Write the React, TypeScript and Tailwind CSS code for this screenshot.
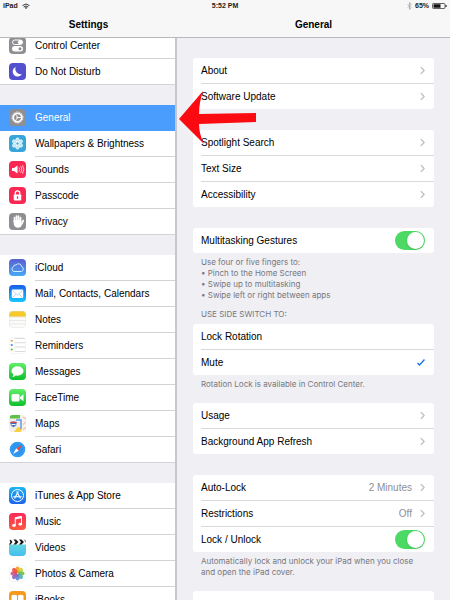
import { ReactNode, useState } from "react";

function Tile({ bg, children }: { bg: string; children: ReactNode }) {
  return (
    <svg viewBox="0 0 34 34" className="size-[17px] shrink-0 overflow-hidden rounded-[4px]" aria-hidden="true">
      <defs>
        <linearGradient id="green" x1="0" y1="0" x2="0" y2="1">
          <stop offset="0" stopColor="#62ee6b" />
          <stop offset="1" stopColor="#0ebf2c" />
        </linearGradient>
        <linearGradient id="cloud" x1="0" y1="0" x2="0" y2="1">
          <stop offset="0" stopColor="#5a5fd0" />
          <stop offset="1" stopColor="#47a8f5" />
        </linearGradient>
        <linearGradient id="mail" x1="0" y1="0" x2="0" y2="1">
          <stop offset="0" stopColor="#1a5ee8" />
          <stop offset="1" stopColor="#17c8fb" />
        </linearGradient>
        <linearGradient id="store" x1="0" y1="0" x2="0" y2="1">
          <stop offset="0" stopColor="#1cb5f5" />
          <stop offset="1" stopColor="#1d63ea" />
        </linearGradient>
        <linearGradient id="music" x1="0" y1="0" x2="0" y2="1">
          <stop offset="0" stopColor="#fb2a5c" />
          <stop offset="1" stopColor="#fb5a3c" />
        </linearGradient>
        <linearGradient id="video" x1="0" y1="0" x2="0" y2="1">
          <stop offset="0" stopColor="#6fe3d2" />
          <stop offset="1" stopColor="#45bdf0" />
        </linearGradient>
      </defs>
      <rect width="34" height="34" fill={bg} />
      {children}
    </svg>
  );
}

const controlCenter = (
  <Tile bg="#8e8e93">
    <rect x="7" y="6" width="20" height="9" rx="4.500" fill="none" stroke="#fff" strokeWidth="2" />
    <circle cx="22.500" cy="10.500" r="4.500" fill="#fff" />
    <rect x="6" y="18" width="22" height="11" rx="5.500" fill="#fff" />
    <circle cx="22" cy="23.500" r="3" fill="#8e8e93" />
  </Tile>
);
const moon = (
  <Tile bg="#5350d0">
    <path d="M13 8a10 10 0 1 0 13 14A11 11 0 0 1 13 8z" fill="#fff" />
  </Tile>
);
const gear = (
  <Tile bg="#8e8e93">
    <circle cx="17" cy="17" r="11" fill="none" stroke="#fff" strokeWidth="2" strokeDasharray="2 1.400" />
    <circle cx="17" cy="17" r="8.500" fill="none" stroke="#fff" strokeWidth="3.500" />
    <path d="M17 17h8M17 17l-4.500-7.500M17 17l-4.500 7.500" stroke="#fff" strokeWidth="1.600" />
    <circle cx="17" cy="17" r="2" fill="#fff" />
  </Tile>
);
const flower = (
  <Tile bg="#37a5d8">
    {[0, 60, 120, 180, 240, 300].map((a) => (
      <g key={a} transform={`rotate(${a} 17 17)`}>
        <ellipse cx="17" cy="10.500" rx="3.500" ry="4.800" fill="#b9e6f7" stroke="#fff" strokeWidth="1.300" />
      </g>
    ))}
    <circle cx="17" cy="17" r="3" fill="#37a5d8" stroke="#fff" strokeWidth="1.500" />
  </Tile>
);
const sound = (
  <Tile bg="#fc2854">
    <path d="M6 14h4l7-5v16l-7-5H6z" fill="#fff" />
    <path d="M20 13q3 4 0 8M23.500 10.500q4.500 6.500 0 13M27 8.500q5.500 8.500 0 17" fill="none" stroke="#fff" strokeWidth="1.500" />
  </Tile>
);
const lock = (
  <Tile bg="#fc2854">
    <path d="M12.500 16v-4a4.500 4.500 0 0 1 9 0v4" fill="none" stroke="#fff" strokeWidth="2.500" />
    <rect x="9.500" y="15" width="15" height="12" rx="1.500" fill="#fff" />
    <path d="M17 18.500v5" stroke="#fc2854" strokeWidth="2.500" />
  </Tile>
);
const hand = (
  <Tile bg="#8e8e93">
    <path d="M11 18V9M15 17V6M19 17V6M23 18V9M26.500 20l2-5" stroke="#fff" strokeWidth="3.400" strokeLinecap="round" />
    <path d="M9.300 14h15.400v7l3-3c-1 5-3 11.500-9 11.500s-9.400-4-9.400-9.500z" fill="#fff" />
  </Tile>
);
const cloud = (
  <Tile bg="url(#cloud)">
    <path
      d="M10 25a5 5 0 0 1-1-9.500 4 4 0 0 1 5-3.500 6.500 6.500 0 0 1 11.500 3.500A5 5 0 0 1 25 25z"
      fill="none"
      stroke="#d9ecff"
      strokeWidth="2"
    />
  </Tile>
);
const mail = (
  <Tile bg="url(#mail)">
    <rect x="5.500" y="9" width="23" height="17" rx="2" fill="#fff" />
    <path d="M7 11l10 9 10-9M7 25l7-7M27 25l-7-7" fill="none" stroke="#8fc0ee" strokeWidth="1.300" />
  </Tile>
);
const notes = (
  <Tile bg="#fbfbfa">
    <rect width="34" height="11" fill="#f7c928" />
    <path d="M0 11.500h34" stroke="#d8c48a" />
    <path d="M0 19h34M0 26h34" stroke="#dedede" strokeWidth="1.200" />
    <rect x="0.500" y="0.500" width="33" height="33" rx="7.500" fill="none" stroke="#dcdcdc" />
  </Tile>
);
const reminders = (
  <Tile bg="#fff">
    <path d="M11 3h22M11 11.500h22M11 20h22M11 29h22" stroke="#cfcfcf" strokeWidth="1.500" />
    <circle cx="5.500" cy="7.500" r="2.200" fill="#f39a3c" />
    <circle cx="5.500" cy="16" r="2.200" fill="#3a8be8" />
    <circle cx="5.500" cy="25" r="2.200" fill="#58c436" />
    <rect x="0.500" y="0.500" width="33" height="33" rx="7.500" fill="none" stroke="#e4e4e4" />
  </Tile>
);
const messages = (
  <Tile bg="url(#green)">
    <ellipse cx="17" cy="16" rx="12" ry="9.500" fill="#fff" />
    <path d="M9 21q0 5-3 7 6 0 8-4z" fill="#fff" />
  </Tile>
);
const facetime = (
  <Tile bg="url(#green)">
    <rect x="5" y="10" width="16" height="15" rx="3" fill="#fff" />
    <path d="M22 16l7-5.500v14L22 19z" fill="#fff" />
  </Tile>
);
const maps = (
  <Tile bg="#f4efe4">
    <path d="M2 0h20v7H2z" fill="#5fc04a" />
    <path d="M26 0h8v34h-8z" fill="#fbf0ea" />
    <path d="M10 34l8-11 8 6-3 5z" fill="#f8cf3d" />
    <path d="M14 10h10v18" fill="none" stroke="#5d9be8" strokeWidth="3" />
    <path d="M28 4l6 4M28 19l6-5M28 29l6-4" stroke="#f0b09b" strokeWidth="2" />
    <path d="M2 14q7-3 14 0 1 7-7 11-8-4-7-11z" fill="#3d6fc4" stroke="#fff" />
    <path d="M2.500 14q6.500-2.500 13 0v2h-13z" fill="#d9493f" />
    <path d="M5 19h8" stroke="#fff" strokeWidth="2" />
  </Tile>
);
const safari = (
  <Tile bg="#fff">
    <circle cx="17" cy="17" r="15.500" fill="#2b95f0" />
    <circle cx="17" cy="17" r="13" fill="none" stroke="#6cbcf8" strokeWidth="2" strokeDasharray="0.800 1.900" />
    <path d="M26 8L14.500 14.500l5 5z" fill="#f0453c" />
    <path d="M8 26l6.500-11.500 5 5z" fill="#fff" />
  </Tile>
);
const store = (
  <Tile bg="url(#store)">
    <circle cx="17" cy="17" r="12" fill="none" stroke="#fff" strokeWidth="2" />
    <path d="M18.500 9L11 23M15.500 9L23 23M8.500 19.500h17" stroke="#fff" strokeWidth="2.300" />
  </Tile>
);
const music = (
  <Tile bg="url(#music)">
    <path d="M12.500 24V9.500L25 7v14.500" fill="none" stroke="#fff" strokeWidth="2" />
    <path d="M12.500 8.500L25 6v4.500L12.500 13z" fill="#fff" />
    <ellipse cx="10" cy="25" rx="3.600" ry="2.800" fill="#fff" />
    <ellipse cx="22.500" cy="22.500" rx="3.600" ry="2.800" fill="#fff" />
  </Tile>
);
const videos = (
  <Tile bg="url(#video)">
    <rect width="34" height="11" fill="#fff" />
    <path d="M0 1h3l4 5-4 5H0l3-5zM9 1h5l5 5-5 5H9l4-5zM20 1h5l5 5-5 5h-5l4-5zM30 1h4v6z" fill="#151515" />
  </Tile>
);
const petals = ["#f79a1e", "#c9cf2c", "#6fbb4a", "#4fb3a8", "#5b86d6", "#8a62bd", "#d0508f", "#ee4b3a"];
const photos = (
  <Tile bg="#fff">
    {petals.map((color, i) => (
      <g key={color} transform={`rotate(${i * 45} 17 17)`}>
        <rect x="13" y="3" width="8" height="13" rx="4" fill={color} fillOpacity="0.880" />
      </g>
    ))}
    <rect x="0.500" y="0.500" width="33" height="33" rx="7.500" fill="none" stroke="#e4e4e4" />
  </Tile>
);
const books = (
  <Tile bg="#f79a1c">
    <path d="M5 9q6-3 11 0v19q-5-3-11 0zM29 9q-6-3-11 0v19q5-3 11 0z" fill="#fff" />
  </Tile>
);

type Item = { label: string; icon: ReactNode };

const groups: Item[][] = [
  [
    { label: "Control Center", icon: controlCenter },
    { label: "Do Not Disturb", icon: moon },
  ],
  [
    { label: "General", icon: gear },
    { label: "Wallpapers & Brightness", icon: flower },
    { label: "Sounds", icon: sound },
    { label: "Passcode", icon: lock },
    { label: "Privacy", icon: hand },
  ],
  [
    { label: "iCloud", icon: cloud },
    { label: "Mail, Contacts, Calendars", icon: mail },
    { label: "Notes", icon: notes },
    { label: "Reminders", icon: reminders },
    { label: "Messages", icon: messages },
    { label: "FaceTime", icon: facetime },
    { label: "Maps", icon: maps },
    { label: "Safari", icon: safari },
  ],
  [
    { label: "iTunes & App Store", icon: store },
    { label: "Music", icon: music },
    { label: "Videos", icon: videos },
    { label: "Photos & Camera", icon: photos },
    { label: "iBooks", icon: books },
  ],
];

function Sidebar() {
  const [selected, setSelected] = useState("General");
  return (
    <nav aria-label="Settings" className="-mt-[5px] flex flex-col gap-5 border-r-2 border-[#c6c6cc]">
      {groups.map((group) => (
        <ul key={group[0].label} className="border-b border-[#d3d3d8] bg-white last:border-b-0">
          {group.map(({ label, icon }, i) => {
            const active = label === selected;
            return (
              <li key={label}>
                {i > 0 && (
                  <div
                    className={
                      active || group[i - 1].label === selected ? "h-px bg-[#4a9dfd]" : "ml-[35px] h-px bg-[#d3d3d6]"
                    }
                  />
                )}
                <button
                  type="button"
                  aria-current={active}
                  onClick={() => setSelected(label)}
                  className={`flex h-[25px] w-full items-center gap-[9px] pl-[9px] text-left whitespace-nowrap ${active ? "bg-[#4a9dfd] text-white" : ""}`}
                >
                  {icon}
                  {label}
                </button>
              </li>
            );
          })}
        </ul>
      ))}
    </nav>
  );
}

function Card({ children }: { children: ReactNode }) {
  return <div className="rounded-[3px] bg-white">{children}</div>;
}

function Divider() {
  return <div className="ml-2 h-px bg-[#d9d9dc]" />;
}

function Chevron() {
  return (
    <svg viewBox="0 0 6 10" className="h-[9px] w-[5px]" aria-hidden="true">
      <path d="M1 1l4 4-4 4" fill="none" stroke="#bcbcc1" strokeWidth="1.500" />
    </svg>
  );
}

function LinkRow({ label, value }: { label: string; value?: string }) {
  return (
    <button type="button" className="flex h-[25px] w-full items-center gap-2 pr-[9px] pl-2 text-left">
      <span className="flex-1">{label}</span>
      {value && <span className="text-[#8e8e93]">{value}</span>}
      <Chevron />
    </button>
  );
}

function SwitchRow({ label }: { label: string }) {
  return (
    <label className="flex h-[25px] items-center justify-between pr-[9px] pl-2">
      {label}
      <input type="checkbox" role="switch" defaultChecked className="peer sr-only" />
      <span className="flex h-[19px] w-[30px] items-center justify-start rounded-full bg-[#d5d5da] p-px peer-checked:justify-end peer-checked:bg-[#4cd964]">
        <span className="size-[17px] rounded-full bg-white shadow-sm" />
      </span>
    </label>
  );
}

function ChoiceRow({ label, checked }: { label: string; checked?: boolean }) {
  return (
    <label className="flex h-[25px] items-center justify-between pr-[9px] pl-2">
      {label}
      <input type="radio" name="side-switch" defaultChecked={checked} className="peer sr-only" />
      <svg viewBox="0 0 16 14" className="invisible h-[7px] w-2 peer-checked:visible" aria-hidden="true">
        <path d="M1 8l4 4L15 1" fill="none" stroke="#1a73f0" strokeWidth="2.800" />
      </svg>
    </label>
  );
}

function Note({ id, children }: { id?: string; children: ReactNode }) {
  return (
    <div id={id} className="px-2 pt-1 font-[Inter,'Liberation_Sans',sans-serif] text-[8px] leading-[11px] text-[#77777c]">
      {children}
    </div>
  );
}

function StatusBar() {
  return (
    <div className="absolute inset-x-0 top-0 z-20 grid h-3 grid-cols-3 items-center px-[3px] text-[7px] font-bold text-[#222]">
      <div className="flex items-center gap-1">
        iPad
        <svg viewBox="0 0 16 12" className="h-[6px] w-2" aria-hidden="true">
          <path d="M1 5q7-6 14 0M3.500 8q4.500-4 9 0" fill="none" stroke="#222" strokeWidth="1.800" />
          <path d="M5.500 9.500q2.500-2 5 0L8 12z" fill="#222" />
        </svg>
      </div>
      <div className="text-center">5:52 PM</div>
      <div className="flex items-center justify-end gap-[3px]">
        <svg viewBox="0 0 8 14" className="h-[8px] w-[5px]" aria-hidden="true">
          <path d="M1 4l6 6-3 3V1l3 3-6 6" fill="none" stroke="#9a9a9a" strokeWidth="1.200" />
        </svg>
        65%
        <svg viewBox="0 0 30 12" className="h-[6px] w-[15px]" aria-hidden="true">
          <rect x="1" y="1" width="25" height="10" rx="2" fill="none" stroke="#333" strokeWidth="1.500" />
          <rect x="3" y="2.500" width="14" height="7" fill="#111" />
          <path d="M28 4v4" stroke="#333" strokeWidth="2.500" />
        </svg>
      </div>
    </div>
  );
}

function Title({ children }: { children: ReactNode }) {
  return (
    <header className="relative z-10 h-[38px] shrink-0 border-b border-[#b9b9bc] bg-[#f7f7f7] pt-[18px] text-center leading-[14px]">
      <h1 className="font-bold">{children}</h1>
    </header>
  );
}

export default function App() {
  return (
    <div className="relative flex h-screen overflow-hidden bg-[#efeff4] font-['Liberation_Sans',Arial,sans-serif] text-[10px] text-black">
      <StatusBar />
      <aside className="flex w-[177px] shrink-0 flex-col">
        <Title>Settings</Title>
        <Sidebar />
      </aside>
      <main className="flex min-w-0 flex-1 flex-col">
        <Title>General</Title>
        <div className="flex flex-col gap-[13px] px-4 pt-5">
          <div className="flex flex-col gap-[21px]">
            <Card>
              <LinkRow label="About" />
              <Divider />
              <LinkRow label="Software Update" />
            </Card>
            <Card>
              <LinkRow label="Spotlight Search" />
              <Divider />
              <LinkRow label="Text Size" />
              <Divider />
              <LinkRow label="Accessibility" />
            </Card>
            <section>
              <Card>
                <SwitchRow label="Multitasking Gestures" />
              </Card>
              <Note>
                <p>Use four or five fingers to:</p>
                <ul>
                  <li>• Pinch to the Home Screen</li>
                  <li>• Swipe up to multitasking</li>
                  <li>• Swipe left or right between apps</li>
                </ul>
              </Note>
              <div role="radiogroup" aria-labelledby="side-switch-title" className="flex flex-col pt-1">
                <div className="pb-1">
                  <Note id="side-switch-title">USE SIDE SWITCH TO:</Note>
                </div>
                <Card>
                  <ChoiceRow label="Lock Rotation" />
                  <Divider />
                  <ChoiceRow label="Mute" checked />
                </Card>
                <Note>Rotation Lock is available in Control Center.</Note>
              </div>
            </section>
          </div>
          <div className="flex flex-col gap-[21px]">
            <Card>
              <LinkRow label="Usage" />
              <Divider />
              <LinkRow label="Background App Refresh" />
            </Card>
            <section>
              <Card>
                <LinkRow label="Auto-Lock" value="2 Minutes" />
                <Divider />
                <LinkRow label="Restrictions" value="Off" />
                <Divider />
                <SwitchRow label="Lock / Unlock" />
              </Card>
              <Note>Automatically lock and unlock your iPad when you close and open the iPad cover.</Note>
            </section>
          </div>
          <Card>
            <div className="h-[25px]" />
          </Card>
        </div>
      </main>
      <svg viewBox="0 0 78 60" className="absolute top-[89px] left-[179px] z-30 h-[60px] w-[78px]" aria-hidden="true">
        <path d="M0 30L24 2Q20 14 20 25L77 24V33L20 35Q20 45 25 55z" fill="#fb0a12" />
      </svg>
    </div>
  );
}
